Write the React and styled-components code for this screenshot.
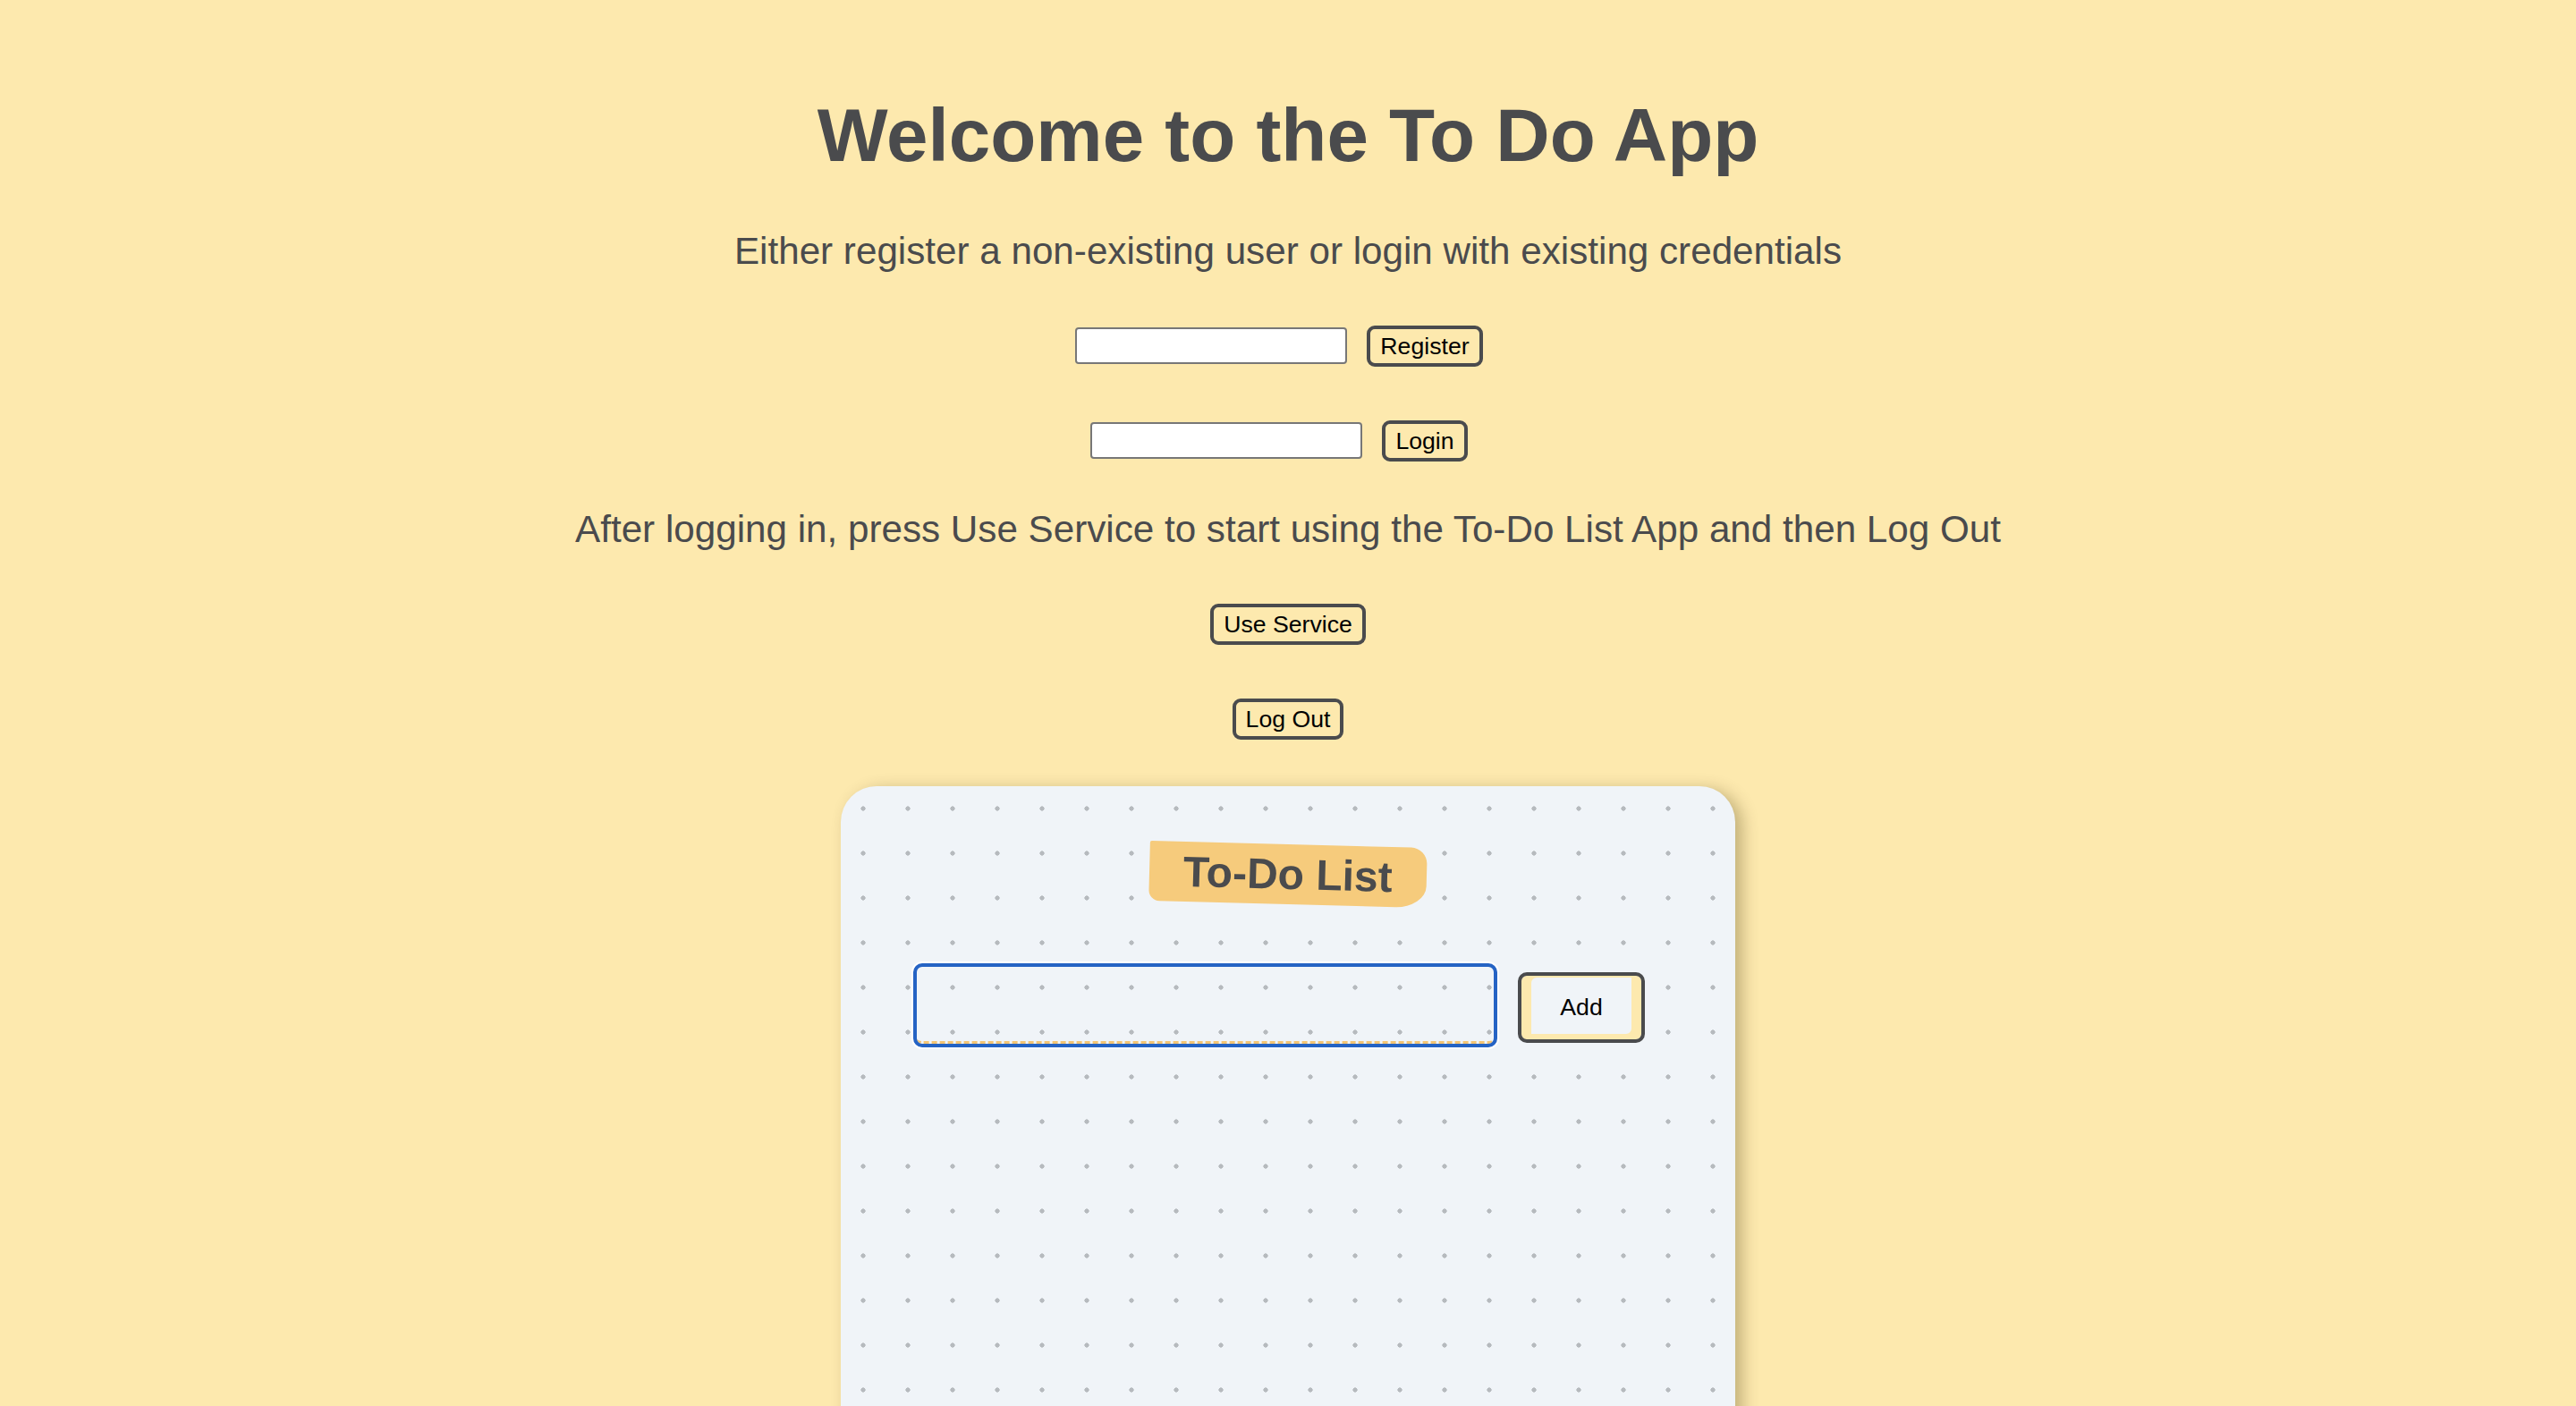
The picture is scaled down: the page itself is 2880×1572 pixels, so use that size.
import * as React from "react";
import styled, { createGlobalStyle } from "styled-components";

const GlobalStyle = createGlobalStyle`
  html, body {
    margin: 0;
    padding: 0;
    background: #fde9ae;
    font-family: "Liberation Sans", Arial, Helvetica, sans-serif;
    overflow: hidden;
  }
`;

const Page = styled.div`
  display: flex;
  flex-direction: column;
  align-items: center;
  padding-top: 104px;
  color: #4a4b4d;
  text-align: center;
`;

const Title = styled.h1`
  margin: 0;
  font-size: 83.6px;
  font-weight: 700;
  line-height: 1.14;
`;

const Text = styled.p`
  margin: ${(p) => p.$top || 0}px 0 0;
  font-size: 42.2px;
  line-height: 1.149;
`;

const Row = styled.div`
  display: flex;
  align-items: center;
  gap: 22px;
  padding-right: 20px;
  margin-top: ${(p) => p.$top || 0}px;
`;

const TextField = styled.input`
  box-sizing: border-box;
  width: 304px;
  height: 41px;
  border: 2px solid #777;
  border-radius: 4px;
  background: #fff;
`;

const Button = styled.button`
  box-sizing: border-box;
  margin-top: ${(p) => p.$top || 0}px;
  padding: 4px 11px;
  border: 4px solid #4a4b4d;
  border-radius: 9px;
  background: transparent;
  color: #000;
  font-family: inherit;
  font-size: 26.67px;
  line-height: 30px;
  cursor: pointer;
`;

const Card = styled.div`
  box-sizing: border-box;
  width: 1000px;
  min-height: 900px;
  margin-top: 52px;
  padding-top: 65px;
  border-radius: 40px;
  background-color: #f0f4f8;
  background-image: radial-gradient(circle, #b6babe 2.4px, transparent 2.8px);
  background-size: 50px 50px;
  box-shadow: 8px 4px 18px rgba(60, 45, 0, 0.3);
  display: flex;
  flex-direction: column;
  align-items: center;
`;

const Label = styled.h2`
  margin: 0;
  padding: 6px 38px;
  font-size: 48px;
  font-weight: 700;
  line-height: 55px;
  color: #4a4b4d;
  background: #f6cb7c;
  border-radius: 2px 18px 34px 12px / 2px 18px 24px 12px;
  transform: rotate(1.5deg);
`;

const AddRow = styled.div`
  align-self: stretch;
  display: flex;
  align-items: center;
  gap: 27px;
  margin-top: 70px;
  padding: 0 101px 0 85px;
`;

const TaskInput = styled.input`
  flex: 1;
  box-sizing: border-box;
  height: 86px;
  padding: 0 16px;
  border: none;
  border-bottom: 3px dashed #f5c574;
  border-radius: 6px;
  background: transparent;
  outline: 4px solid #2563c4;
  box-shadow: 0 0 0 6px #fff;
  font-size: 32px;
  font-family: inherit;
`;

const AddButton = styled.button`
  box-sizing: border-box;
  width: 142px;
  height: 79px;
  margin-top: 4px;
  border: 4px solid #4a4b4d;
  border-radius: 10px;
  background: #f0f4f8;
  box-shadow: inset 11px 2px 0 #fde9ae, inset -11px -6px 0 #fde9ae;
  color: #000;
  font-family: inherit;
  font-size: 26.67px;
  cursor: pointer;
`;

export default function App() {
  return (
    <>
      <GlobalStyle />
      <Page>
        <Title>Welcome to the To Do App</Title>
        <Text $top={58}>
          Either register a non-existing user or login with existing credentials
        </Text>
        <Row $top={58}>
          <TextField type="text" />
          <Button>Register</Button>
        </Row>
        <Row $top={60}>
          <TextField type="text" />
          <Button>Login</Button>
        </Row>
        <Text $top={52}>
          After logging in, press Use Service to start using the To-Do List App and then Log Out
        </Text>
        <Button $top={59}>Use Service</Button>
        <Button $top={60}>Log Out</Button>
        <Card>
          <Label>To-Do List</Label>
          <AddRow>
            <TaskInput type="text" />
            <AddButton>Add</AddButton>
          </AddRow>
        </Card>
      </Page>
    </>
  );
}
